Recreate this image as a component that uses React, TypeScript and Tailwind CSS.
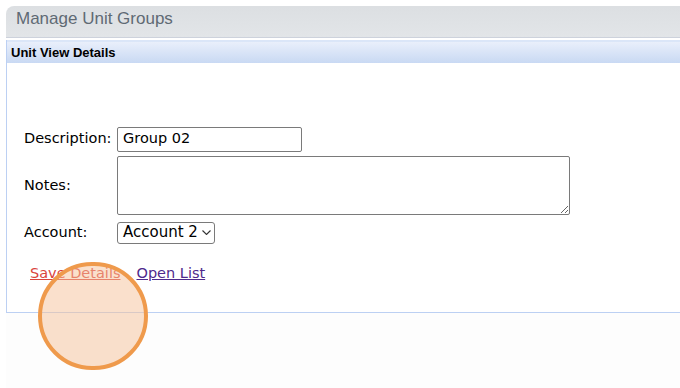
import React from "react";

export default function App() {
  return (
    <div className="relative w-[680px] h-[388px] bg-white overflow-hidden" style={{ fontFamily: '"DejaVu Sans", Verdana, sans-serif' }}>
      <div className="pt-[6px] pl-[6px] h-full flex flex-col">
        <div className="h-[32px] rounded-tl-[8px] bg-gradient-to-b from-[#dcdfe2] to-[#e2e5e8] flex items-start pt-[4px] pl-[10px] border-b border-[#cdd2dc]">
          <span className="text-[17px] text-[#5f6a74] font-['Liberation_Sans',Arial,sans-serif] leading-[18px]">Manage Unit Groups</span>
        </div>
        <div className="h-[2px] bg-white" />
        <div className="border-l border-b border-[#bcd0f3] h-[273px] flex flex-col">
          <div className="h-[23px] bg-gradient-to-b from-[#e9effb] to-[#c9d9f3] border-t-2 border-[#dbe6f8] flex items-center pl-[4px]">
            <span className="text-[13px] font-bold text-black font-['Liberation_Sans',Arial,sans-serif]">Unit View Details</span>
          </div>
          <div className="pl-[17px] pt-[64px] text-[14.5px] text-black">
            <div className="flex items-center h-[24px]">
              <span className="w-[93px]">Description:</span>
              <div className="w-[185px] h-[25px] border border-[#7a7a7a] rounded-[2px] flex items-center pl-[5px]">Group 02</div>
            </div>
            <div className="flex items-center mt-[5px]">
              <span className="w-[93px]">Notes:</span>
              <textarea className="w-[453px] h-[59px] border border-[#7a7a7a] rounded-[2px] resize outline-none" />
            </div>
            <div className="flex items-center mt-[6px] h-[23px]">
              <span className="w-[93px]">Account:</span>
              <div className="w-[98px] h-[22px] border border-[#7a7a7a] rounded-[3px] flex items-center pl-[5px] gap-[4px]">
                <span className="text-[15px]">Account 2</span>
                <svg width="9" height="5" viewBox="0 0 9 5" fill="none" stroke="#333" strokeWidth="1.1"><path d="M0.5 0.5l4 4 4-4" /></svg>
              </div>
            </div>
            <div className="flex gap-[16px] mt-[19px] pl-[6px] text-[14.5px]">
              <span className="text-[#d9443c] underline">Save Details</span>
              <span className="text-[#4f2a8c] underline">Open List</span>
            </div>
          </div>
        </div>
        <div className="flex-1 bg-[#fdfdfd]" />
      </div>
      <div className="absolute left-[38px] top-[262px] w-[110px] h-[108px] rounded-full border-[4px] border-[#ef9a4c] bg-[#f5c19a]/50" />
    </div>
  );
}
